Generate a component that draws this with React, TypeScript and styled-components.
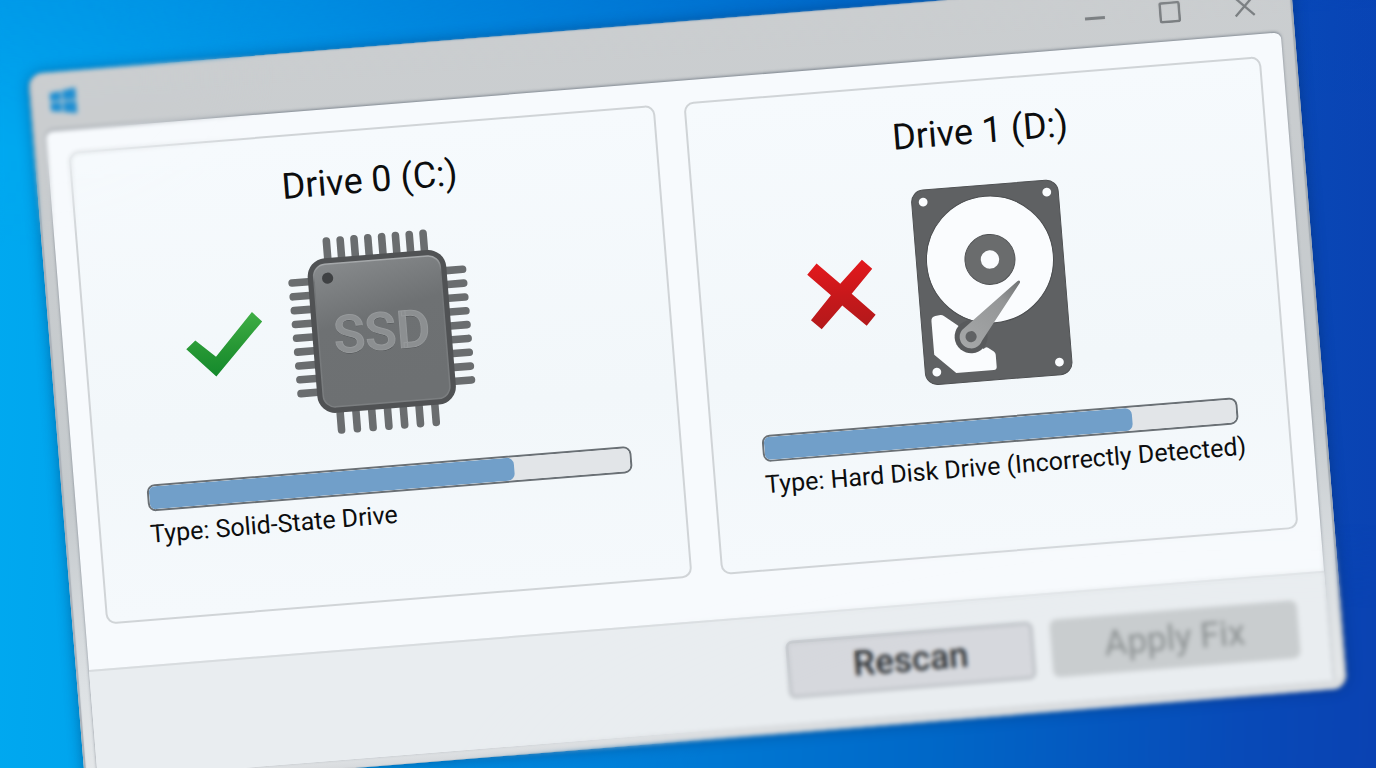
import React from "react";
import styled, { createGlobalStyle } from "styled-components";

const GlobalStyle = createGlobalStyle`
  * { box-sizing: border-box; }
  body { margin: 0; font-family: Roboto, "Liberation Sans", sans-serif; color: #0c0d0e; }
  h2, p { margin: 0; font-weight: 400; }
`;

const Desktop = styled.div`
  position: relative;
  height: 100vh;
  overflow: hidden;
  background:
    linear-gradient(180deg, rgba(0, 70, 190, 0.14), rgba(0, 90, 190, 0) 20%),
    linear-gradient(92deg, #00a9f0 0%, #00a2ec 12%, #008be0 35%, #0068c8 68%, #084ab8 90%, #0a42b2 100%);
`;

const AppWindow = styled.main`
  display: flex;
  flex-direction: column;
  width: 92vw;
  margin: 74px 0 0 28px;
  transform: rotate(-4.6deg);
  transform-origin: 0 0;
  border-radius: 14px;
  background: linear-gradient(180deg, #cbced0 0%, #c5cacd 60%, #dde1e4 86%, #e4e7e9 98%, #d6d9dc 100%);
  box-shadow: 0 0 14px rgba(0, 40, 90, 0.45), inset -2px 0 1px #a3aab1, inset 2px 0 1px #a9b0b8;
`;

const TitleBar = styled.header`
  display: flex;
  align-items: center;
  justify-content: space-between;
  height: 59px;
  padding: 0 10px 0 20px;
`;

const Logo = styled.svg`
  width: 26px;
  height: 26px;
  filter: blur(1px);
`;

const WindowControls = styled.div`
  display: flex;
`;

const ControlButton = styled.button`
  display: grid;
  place-items: center;
  width: 75px;
  height: 40px;
  padding: 0;
  border: 0;
  background: none;
  color: #7b7f82;
`;

const Body = styled.div`
  margin: 0 14px 9px 13px;
  border-radius: 7px 7px 0 0;
  background: #f7fafd;
  box-shadow: 0 -1px 3px rgba(90, 100, 112, 0.7);
`;

const Drives = styled.section`
  display: grid;
  grid-template-columns: minmax(0, 588fr) minmax(0, 579fr);
  gap: 29px;
  padding: 22px 22px 44px 21px;
`;

const DriveCard = styled.article`
  padding: 28px 49px 68px;
  border: 2px solid #d0d4d7;
  border-radius: 10px;
  background: linear-gradient(180deg, #f6fafd, #f2f7fa 60%, #f5f9fc);
`;

const DriveTitle = styled.h2`
  padding-left: 8px;
  font-size: 36px;
  line-height: 44px;
  text-align: center;
`;

const Artwork = styled.div`
  display: grid;
  grid-template-columns: 1fr auto 1fr;
  align-items: center;
  column-gap: 23px;
  margin: 30px 0 34px;
  padding-left: 8px;
`;

const Mark = styled.svg`
  justify-self: end;
  height: 68px;
`;

const DriveArt = styled.svg`
  width: 190px;
  height: 200px;
`;

const Usage = styled.progress`
  display: block;
  width: 100%;
  height: 27px;
  appearance: none;
  overflow: hidden;
  border: 2px solid #6a7075;
  border-radius: 8px;
  background: #e1e4e7;

  &::-webkit-progress-bar {
    background: #e2e5e8;
  }
  &::-webkit-progress-value {
    border-radius: 0 7px 7px 0;
    background: #719fc9;
  }
`;

const DriveType = styled.p`
  margin-top: 7px;
  font-size: 25px;
  line-height: 32px;
  white-space: nowrap;
`;

const Footer = styled.footer`
  display: flex;
  justify-content: flex-end;
  gap: 17px;
  padding: 25px 30px 25px;
  border-top: 2px solid #d8dcdf;
  background: #e9edf0;
`;

const ActionButton = styled.button`
  width: 248px;
  height: 58px;
  padding: 0;
  border: 3px solid #bcc0c5;
  border-radius: 7px;
  background: #d6d8dd;
  color: #2c3033;
  font-family: inherit;
  font-size: 35px;
  font-weight: 500;
  line-height: 40px;

  &:disabled {
    border-color: #c9cdcf;
    background: #c9cdcf;
    color: #8a8f90;
    font-weight: 400;
    filter: blur(1px);
  }
`;

const FocusFalloff = styled.div<{ $amount: number; $mask: string }>`
  position: absolute;
  inset: 0;
  pointer-events: none;
  backdrop-filter: blur(${(p) => p.$amount}px);
  mask-image: ${(p) => p.$mask};
`;

const range = (count: number, start: number, end: number) =>
  Array.from({ length: count }, (_, i) => start + ((end - start) * i) / (count - 1));

function CheckMark() {
  return (
    <Mark width="80" viewBox="-40 -34 80 68" role="img" aria-label="Detected correctly">
      <defs>
        <linearGradient id="green" x1="0" y1="0" x2="0" y2="1">
          <stop offset="0" stopColor="#3fae45" />
          <stop offset="0.6" stopColor="#249533" />
          <stop offset="1" stopColor="#148a2c" />
        </linearGradient>
      </defs>
      <path fill="url(#green)" d="M-38.3 2L-28.6-5.9-9.3 12 30.1-29.7 39.6-19.6-10.5 31.6Z" />
    </Mark>
  );
}

function CrossMark() {
  return (
    <Mark width="66" viewBox="-33 -34 66 68" role="img" aria-label="Detected incorrectly">
      <defs>
        <linearGradient id="red" x1="0" y1="0" x2="0" y2="1">
          <stop offset="0" stopColor="#e3191d" />
          <stop offset="0.5" stopColor="#c8181b" />
          <stop offset="1" stopColor="#b3191b" />
        </linearGradient>
      </defs>
      <path
        fill="url(#red)"
        d="M-22.2-32.8L-.2-10.7 23.3-32.9 32.9-23.2 10.4.1 32.6 23 22.8 33.2.1 11-22.3 33-32.3 23.2-10.4-.1-32.4-22.3Z"
      />
    </Mark>
  );
}

function ChipArt() {
  return (
    <DriveArt viewBox="-95 -100 190 200" role="img" aria-label="Solid-state drive">
      <defs>
        <linearGradient id="chip" x1="0" y1="0" x2="0.2" y2="1">
          <stop offset="0" stopColor="#888b8d" />
          <stop offset="0.45" stopColor="#6e7173" />
          <stop offset="1" stopColor="#6d7072" />
        </linearGradient>
        <linearGradient id="rim" x1="0" y1="0" x2="0" y2="1">
          <stop offset="0" stopColor="#a5a8aa" />
          <stop offset="0.12" stopColor="#727577" />
          <stop offset="1" stopColor="#7b7e80" />
        </linearGradient>
      </defs>
      <g stroke="#6a6d6f" strokeWidth="7.6" strokeLinecap="round">
        {range(8, -48, 49).map((x) => <path key={x} d={`M${x}-94.500V-74`} />)}
        {range(7, -48, 47).map((x) => <path key={x} d={`M${x} 95V74`} />)}
        {range(9, -55.5, 55.5).map((y) => <path key={y} d={`M-85.500 ${y}H-66M66 ${y}H85.500`} />)}
      </g>
      <rect x="-69.500" y="-77.500" width="139" height="155" rx="18" fill="#505254" />
      <rect x="-63.500" y="-71.500" width="127" height="143" rx="12" fill="url(#chip)" stroke="url(#rim)" strokeWidth="1.500" />
      <circle cx="-49.700" cy="-57.400" r="5.600" fill="#3f4143" />
      <g textAnchor="middle" fontFamily="Roboto, sans-serif" fontSize="52" fontWeight="500">
        <text x="0" y="19" fill="#505355" aria-hidden="true">SSD</text>
        <text x="0" y="18" fill="#8c8f91" stroke="#96999b" strokeWidth="1">SSD</text>
      </g>
    </DriveArt>
  );
}

function DiskArt() {
  return (
    <DriveArt viewBox="-95 -100 190 200" role="img" aria-label="Hard disk drive">
      <defs>
        <linearGradient id="arm" x1="0" y1="1" x2="1" y2="0">
          <stop offset="0" stopColor="#a6a8a9" />
          <stop offset="0.7" stopColor="#949697" />
          <stop offset="1" stopColor="#6f7273" />
        </linearGradient>
      </defs>
      <rect x="-73.500" y="-97.500" width="147" height="195" rx="12" fill="#5f6163" stroke="#4f5153" />
      <g fill="#fafcfe">
        <circle cx="-62" cy="-85.500" r="4.400" />
        <circle cx="62" cy="-85.500" r="4.400" />
        <circle cx="-62" cy="85" r="4.400" />
        <circle cx="61" cy="85" r="4.400" />
        <circle cx="0" cy="-23" r="63.500" stroke="#4b4d4f" />
        <path d="M-63.300 34Q-63.300 29.500-59 29L-54 28.500Q-52 28.400-50.500 29.700L-37.300 40.200-13.500 65.800Q-11 63.200-9 64.800L-3.500 69Q-1.900 70.200-1.900 72.500V84.500Q-1.900 87.500-5 87.500H-42.700L-63.200 67.600Z" />
      </g>
      <circle cx="0" cy="-23" r="25" fill="#6a6c6d" stroke="#505254" />
      <circle cx="0" cy="-23" r="9.200" fill="#fafcfe" />
      <circle cx="-25" cy="52.500" r="16.500" fill="#585a5c" />
      <path fill="url(#arm)" d="M27.700.5Q28.600 1.200 28 2.600L-14.500 57.500A11.500 11.500 0 1 1-33.500 45L25.500.8Q27 .1 27.700.5Z" />
      <circle cx="-25" cy="52.500" r="5.600" fill="#606264" />
    </DriveArt>
  );
}

interface DriveProps {
  title: string;
  type: string;
  used: number;
  children: React.ReactNode;
}

function Drive({ title, type, used, children }: DriveProps) {
  return (
    <DriveCard>
      <DriveTitle>{title}</DriveTitle>
      <Artwork>{children}</Artwork>
      <Usage max={100} value={used} aria-label={`${title} space used`} />
      <DriveType>{type}</DriveType>
    </DriveCard>
  );
}

export default function App() {
  return (
    <Desktop>
      <GlobalStyle />
      <AppWindow>
        <TitleBar>
          <Logo viewBox="0 0 26 26" aria-hidden="true">
            <path fill="#1f8fd2" d="M0 4L11 2.500V12H0ZM12.500 2.300L26 0V12H12.500ZM0 13.500H11V23.500L0 22ZM12.500 13.500H26V26L12.500 23.700Z" />
          </Logo>
          <WindowControls>
            <ControlButton aria-label="Minimize">
              <svg width="22" height="22" fill="none" stroke="currentColor" strokeWidth="3"><path d="M1 11H21" /></svg>
            </ControlButton>
            <ControlButton aria-label="Maximize">
              <svg width="22" height="22" fill="none" stroke="currentColor" strokeWidth="2.500"><rect x="1.500" y="1.500" width="19" height="19" rx="1.500" /></svg>
            </ControlButton>
            <ControlButton aria-label="Close">
              <svg width="22" height="22" fill="none" stroke="currentColor" strokeWidth="2.300"><path d="M1.500 1.500L20.500 20.500M20.500 1.500L1.500 20.500" /></svg>
            </ControlButton>
          </WindowControls>
        </TitleBar>
        <Body>
          <Drives>
            <Drive title="Drive 0 (C:)" type="Type: Solid-State Drive" used={76}>
              <CheckMark />
              <ChipArt />
            </Drive>
            <Drive title="Drive 1 (D:)" type="Type: Hard Disk Drive (Incorrectly Detected)" used={78}>
              <CrossMark />
              <DiskArt />
            </Drive>
          </Drives>
          <Footer>
            <ActionButton>Rescan</ActionButton>
            <ActionButton disabled>Apply Fix</ActionButton>
          </Footer>
        </Body>
      </AppWindow>
      <FocusFalloff $amount={2} $mask="radial-gradient(ellipse 20% 22% at 0% 10%, #000 50%, transparent 100%)" />
      <FocusFalloff $amount={1} $mask="linear-gradient(176deg, #000 0%, transparent 12%)" />
      <FocusFalloff $amount={2} $mask="radial-gradient(ellipse 60% 36% at 92% 104%, #000 70%, transparent 100%)" />
    </Desktop>
  );
}
